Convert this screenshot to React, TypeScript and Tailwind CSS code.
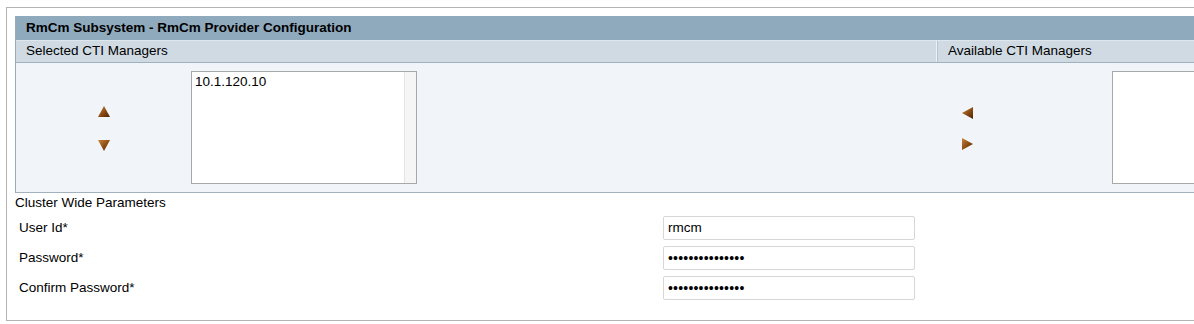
import { useState } from 'react';

function Arrow({ dir }: { dir: 'up' | 'down' | 'left' | 'right' }) {
    const pts = {
        up: '6,0 12,11 0,11',
        down: '0,0 12,0 6,11',
        left: '0,6 11,0 11,12',
        right: '0,0 11,6 0,12',
    }[dir];
    const gid = `g-${dir}`;
    return (
        <svg width="12" height="12" viewBox="0 0 12 12">
            <defs>
                <linearGradient id={gid} x1="0" y1="0" x2="1" y2="1">
                    <stop offset="0" stopColor="#c8843a" />
                    <stop offset="0.55" stopColor="#8a4a12" />
                    <stop offset="1" stopColor="#4a2404" />
                </linearGradient>
            </defs>
            <polygon points={pts} fill={`url(#${gid})`} />
        </svg>
    );
}

function Field({ label, value, secret }: { label: string; value: string; secret?: boolean }) {
    return (
        <div className="flex items-center h-[30px]">
            <div className="w-[648px] pl-[4px]">{label}</div>
            <div className="w-[252px] h-[24px] border border-[#d6d6d6] rounded-[2px] bg-white flex items-center pl-[4px]">
                {secret ? <span className="text-[14px] tracking-[0.2px]">{'•'.repeat(value.length)}</span> : value}
            </div>
        </div>
    );
}

export default function App() {
    const [selected] = useState(['10.1.120.10']);

    return (
        <div className="w-[1194px] h-[324px] overflow-hidden bg-white text-[13.5px] text-black font-['Liberation_Sans',Arial,sans-serif]">
            <div className="ml-[6px] mt-[7px] w-[1400px] h-[314px] border border-[#b4b4b4] pl-[8px] pt-[8px]">
                <div className="border-l border-[#9aaab8]">
                    <div className="h-[24px] bg-[#8fa9bd] font-bold flex items-center pl-[10px]">
                        RmCm Subsystem - RmCm Provider Configuration
                    </div>
                    <div className="h-[23px] bg-[#cfdae3] border-t border-[#dfe7ee] border-b border-b-[#9eb1c0] flex">
                        <div className="w-[921px] shrink-0 pl-[10px] flex items-center border-r border-[#eef2f6]">Selected CTI Managers</div>
                        <div className="pl-[10px] flex items-center border-l border-[#b6c3cd]">Available CTI Managers</div>
                    </div>
                    <div className="h-[130px] bg-[#f1f5f9] border-b border-[#a3b1bd] flex">
                        <div className="w-[922px] shrink-0 flex items-center">
                            <div className="w-[175px] flex flex-col items-center gap-[22px] pt-[2px]">
                                <Arrow dir="up" />
                                <Arrow dir="down" />
                            </div>
                            <div className="w-[226px] h-[113px] bg-white border border-[#a8a8a8] flex">
                                <div className="flex-1 pl-[3px] pt-[2px] leading-[16px]">
                                    {selected.map((s) => (
                                        <div key={s}>{s}</div>
                                    ))}
                                </div>
                                <div className="w-[12px] bg-[#f5f5f5] border-l border-[#e4e4e4]" />
                            </div>
                        </div>
                        <div className="flex items-center">
                            <div className="w-[60px] shrink-0 flex flex-col items-center gap-[19px] pt-[1px]">
                                <Arrow dir="left" />
                                <Arrow dir="right" />
                            </div>
                            <div className="ml-[114px] shrink-0 w-[200px] h-[113px] bg-white border border-[#a8a8a8]" />
                        </div>
                    </div>
                </div>
                <div className="pt-[2px] leading-[16px]">Cluster Wide Parameters</div>
                <div className="mt-[2px] flex flex-col">
                    <Field label="User Id*" value="rmcm" />
                    <Field label="Password*" value="rmcmpassword123" secret />
                    <Field label="Confirm Password*" value="rmcmpassword123" secret />
                </div>
            </div>
        </div>
    );
}
